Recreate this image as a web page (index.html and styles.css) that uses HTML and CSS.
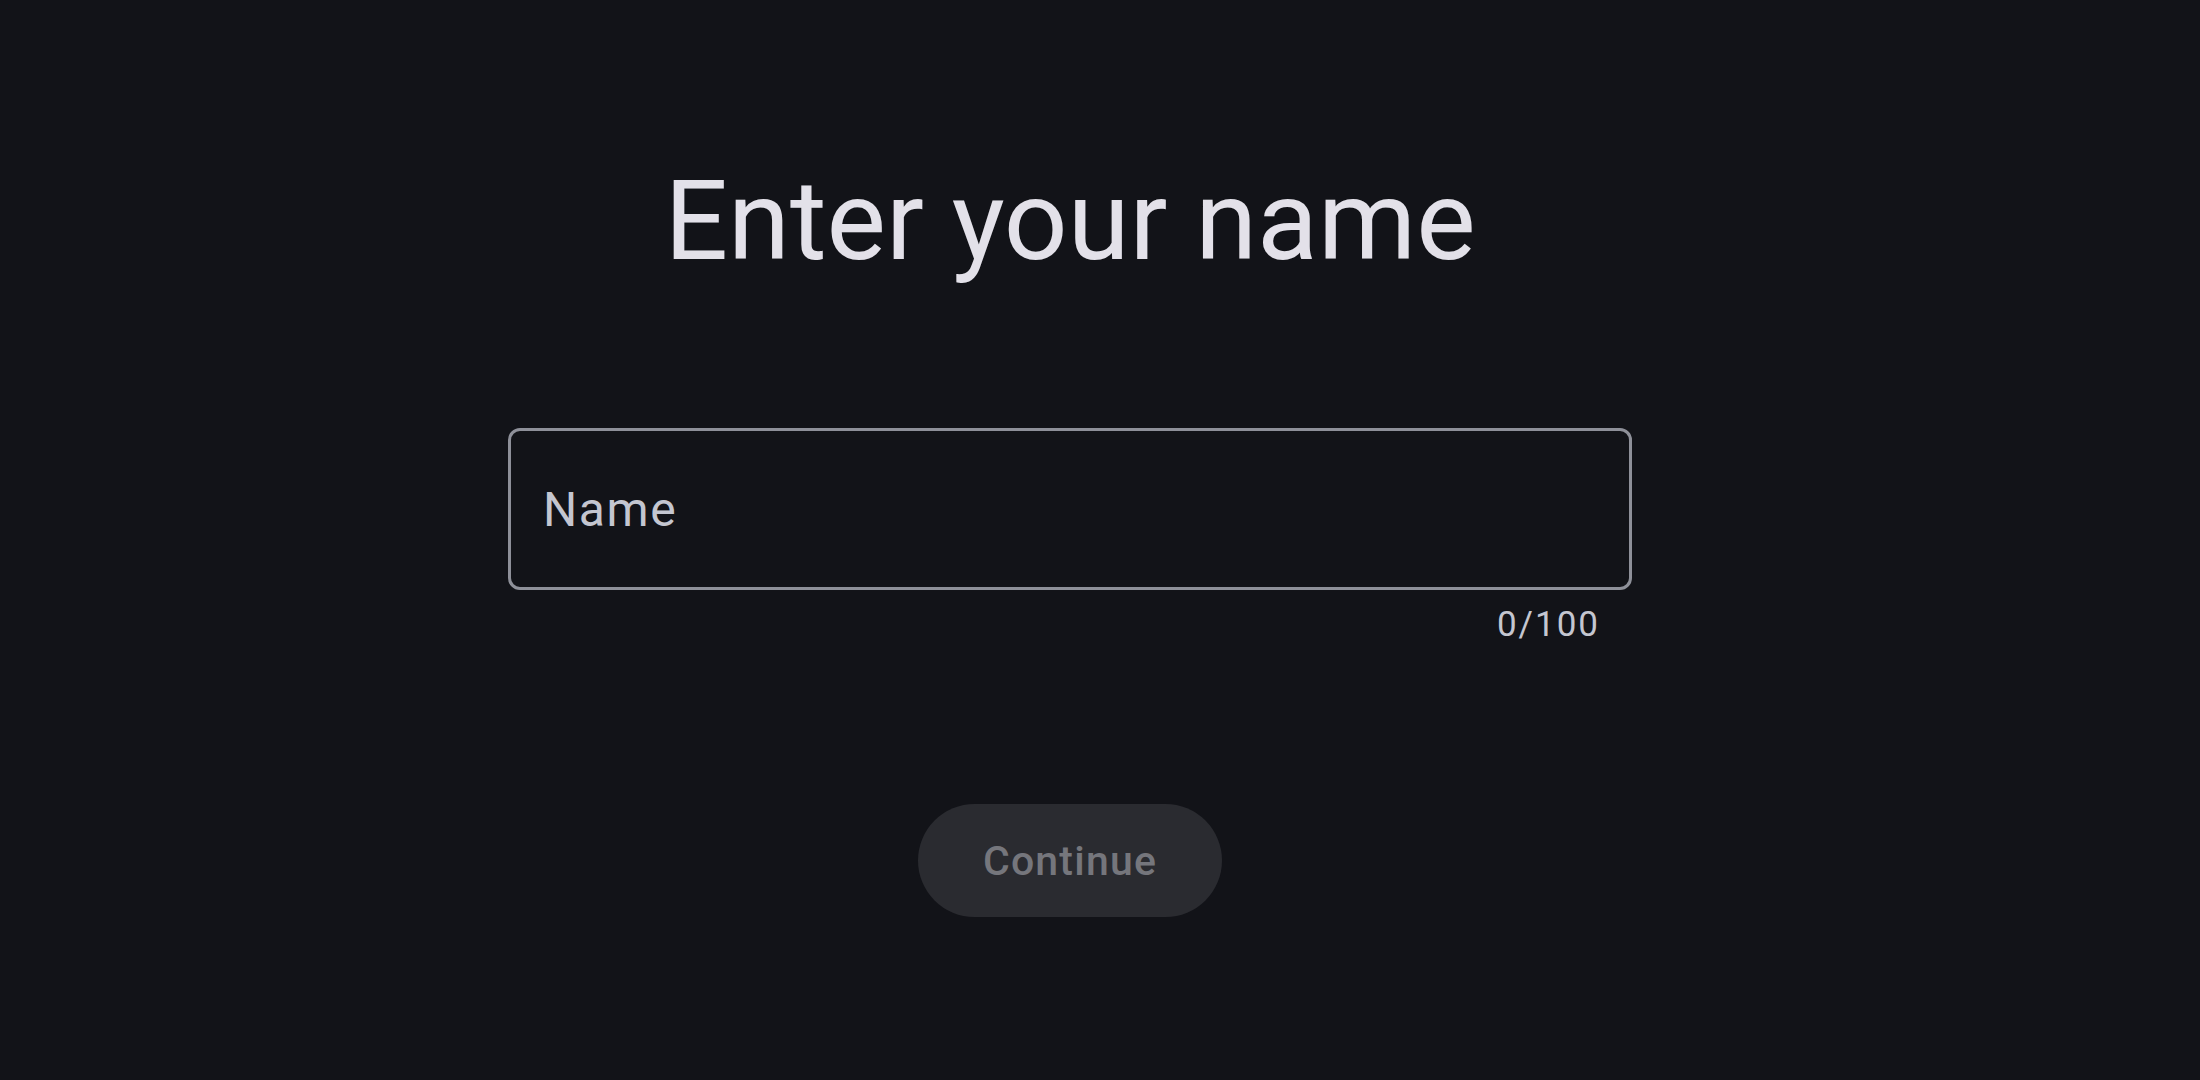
FILE: index.html
```html
<!DOCTYPE html>
<html lang="en">
<head>
<meta charset="utf-8">
<title>Enter your name</title>
<link rel="stylesheet" href="styles.css">
</head>
<body>
<main class="page">
  <h1 class="title">Enter your name</h1>
  <div class="field-wrap">
    <label class="field">
      <input class="field-input" type="text" placeholder="Name" maxlength="100">
    </label>
    <div class="counter">0/100</div>
  </div>
  <button class="continue" type="button" disabled>Continue</button>
</main>
</body>
</html>
```

FILE: styles.css
```css
html, body {
  margin: 0;
  padding: 0;
  background: #121318;
  height: 100%;
}

body {
  font-family: Roboto, "Noto Sans", "Liberation Sans", sans-serif;
  color: #e3e1e9;
}

.page {
  display: flex;
  flex-direction: column;
  align-items: center;
  padding: 165px 60px 0 0;
}

.title {
  margin: 0;
  font-size: 112px;
  line-height: 112px;
  font-weight: 400;
  letter-spacing: 0;
  color: #e3e1e9;
}

.field-wrap {
  margin-top: 151px;
  width: 1124px;
  display: flex;
  flex-direction: column;
}

.field {
  display: flex;
  align-items: center;
  box-sizing: border-box;
  height: 162px;
  border: 3px solid #8e9099;
  border-radius: 12px;
  padding: 0 32px;
}

.field-input {
  flex: 1;
  border: 0;
  outline: none;
  background: transparent;
  font-family: Roboto, "Noto Sans", "Liberation Sans", sans-serif;
  font-size: 48px;
  letter-spacing: 1.6px;
  color: #e3e1e9;
  padding: 0;
  margin: 0;
}

.field-input::placeholder {
  color: #c4c6d0;
  opacity: 1;
}

.counter {
  align-self: flex-end;
  margin-top: 12px;
  padding-right: 32px;
  font-size: 35px;
  line-height: 46px;
  letter-spacing: 2px;
  color: #c4c6d0;
}

.continue {
  margin-top: 156px;
  width: 304px;
  height: 113px;
  border: 0;
  border-radius: 57px;
  background: #2a2b30;
  color: #75767c;
  font-family: Roboto, "Noto Sans", "Liberation Sans", sans-serif;
  font-size: 41px;
  font-weight: 500;
  letter-spacing: 1.2px;
  padding: 0;
}
```
